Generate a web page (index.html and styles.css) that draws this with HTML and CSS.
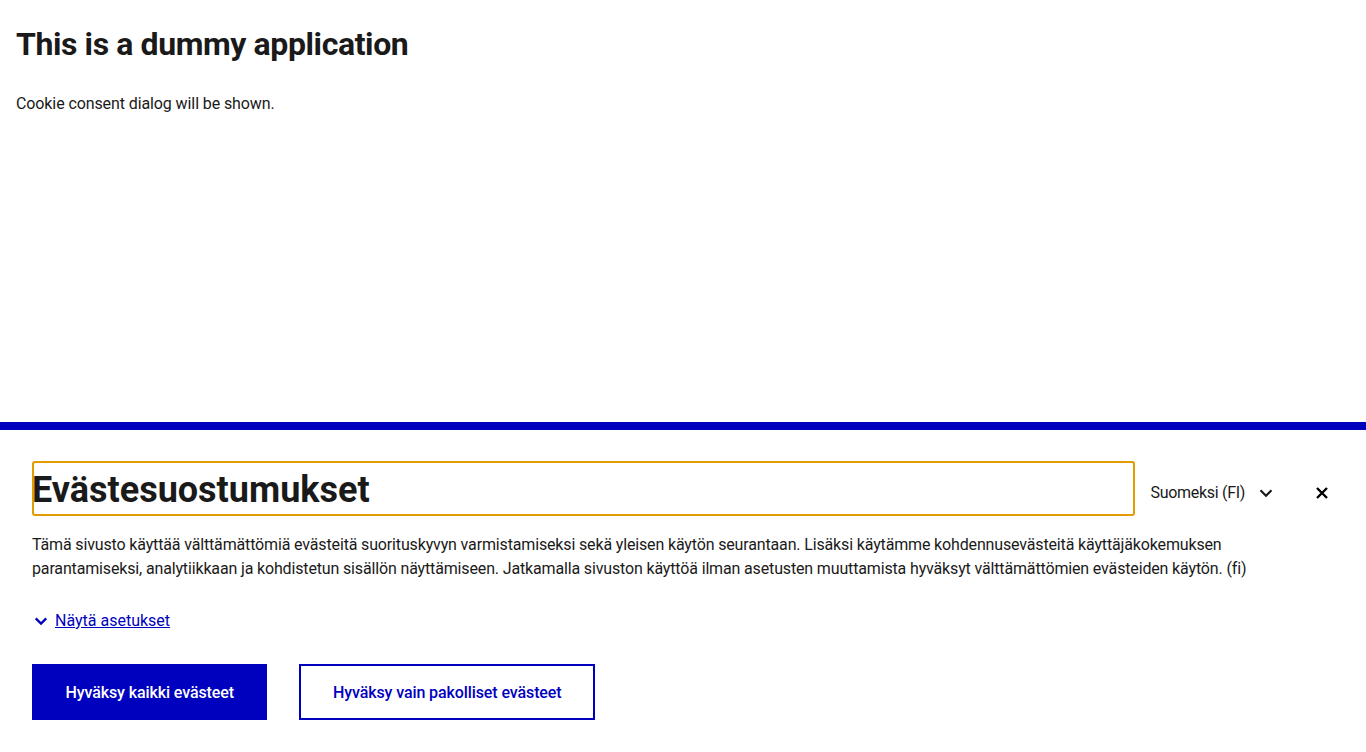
FILE: index.html
```html
<!DOCTYPE html>
<html lang="fi">
<head>
<meta charset="utf-8">
<title>Dummy application</title>
<link rel="stylesheet" href="styles.css">
</head>
<body>
<main class="app">
  <h1 class="app-title">This is a dummy application</h1>
  <p class="app-text">Cookie consent dialog will be shown.</p>
</main>
<section class="banner" aria-label="Evästesuostumukset">
  <div class="banner-inner">
    <div class="banner-head">
      <h2 class="banner-title" tabindex="-1">Evästesuostumukset</h2>
      <button class="lang" type="button">Suomeksi (FI)
        <svg class="lang-icon" viewBox="0 0 24 24" width="24" height="24" aria-hidden="true"><path d="M6 9l6 6 6-6" fill="none" stroke="currentColor" stroke-width="2.4"/></svg>
      </button>
      <button class="close" type="button" aria-label="Sulje">
        <svg viewBox="0 0 24 24" width="24" height="24" aria-hidden="true"><path d="M7 7l10 10M17 7L7 17" fill="none" stroke="currentColor" stroke-width="2.4"/></svg>
      </button>
    </div>
    <p class="banner-text">Tämä sivusto käyttää välttämättömiä evästeitä suorituskyvyn varmistamiseksi sekä yleisen käytön seurantaan. Lisäksi käytämme kohdennusevästeitä käyttäjäkokemuksen parantamiseksi, analytiikkaan ja kohdistetun sisällön näyttämiseen. Jatkamalla sivuston käyttöä ilman asetusten muuttamista hyväksyt välttämättömien evästeiden käytön. (fi)</p>
    <a class="toggle" href="#">
      <svg class="toggle-icon" viewBox="0 0 24 24" width="18" height="18" aria-hidden="true"><path d="M5 8.5l7 7 7-7" fill="none" stroke="currentColor" stroke-width="3"/></svg>
      <span class="toggle-text">Näytä asetukset</span>
    </a>
    <div class="actions">
      <button class="btn btn-primary" type="button">Hyväksy kaikki evästeet</button>
      <button class="btn btn-secondary" type="button">Hyväksy vain pakolliset evästeet</button>
    </div>
  </div>
</section>
</body>
</html>
```

FILE: styles.css
```css
html, body {
  margin: 0;
  padding: 0;
  background: #fff;
  color: #1a1a1a;
  font-family: Roboto, "Liberation Sans", sans-serif;
}
.app {
  padding: 16px;
}
.app-title {
  margin: 6px 0 0;
  font-size: 32px;
  line-height: 44px;
  font-weight: 700;
  letter-spacing: -0.4px;
}
.app-text {
  margin: 26px 0 0;
  font-size: 16px;
  line-height: 24px;
  letter-spacing: -0.1px;
}
.banner {
  position: fixed;
  left: 0;
  right: 0;
  bottom: 0;
  height: 322px;
  background: #fff;
  border-top: 8px solid #0000bf;
}
.banner-inner {
  padding: 31px 32px 0;
}
.banner-head {
  display: flex;
  align-items: center;
}
.banner-title {
  flex: 1;
  margin: 0;
  box-sizing: border-box;
  height: 55px;
  padding-top: 4px;
  font-size: 36px;
  line-height: 51px;
  font-weight: 700;
  outline: 2px solid #e39c00;
  outline-offset: -2px;
  border-radius: 3px;
}
.lang {
  display: flex;
  align-items: center;
  gap: 10px;
  margin-left: 15px;
  padding: 8px 0 0;
  border: 0;
  background: none;
  font: inherit;
  font-size: 16px;
  letter-spacing: -0.3px;
  color: #1a1a1a;
}
.lang-icon {
  width: 22px;
  height: 22px;
}
.close {
  margin-left: 33px;
  padding: 9px 0 0;
  border: 0;
  background: none;
  color: #000;
  display: flex;
}
.banner-text {
  margin: 17px 0 0;
  max-width: 1240px;
  font-size: 16px;
  line-height: 24px;
  letter-spacing: -0.15px;
}
.toggle {
  display: inline-flex;
  align-items: center;
  gap: 5px;
  margin-top: 28px;
  color: #0000bf;
  font-size: 16px;
  line-height: 24px;
}
.toggle-icon {
  width: 18px;
  height: 18px;
}
.toggle-text {
  text-decoration: underline;
}
.actions {
  display: flex;
  gap: 32px;
  margin-top: 30px;
}
.btn {
  height: 56px;
  padding: 0 31.5px;
  font: inherit;
  font-size: 16px;
  font-weight: 500;
  letter-spacing: -0.1px;
  border: 2px solid #0000bf;
  border-radius: 0;
}
.btn-primary {
  background: #0000bf;
  color: #fff;
}
.btn-secondary {
  background: #fff;
  color: #0000bf;
}
```
